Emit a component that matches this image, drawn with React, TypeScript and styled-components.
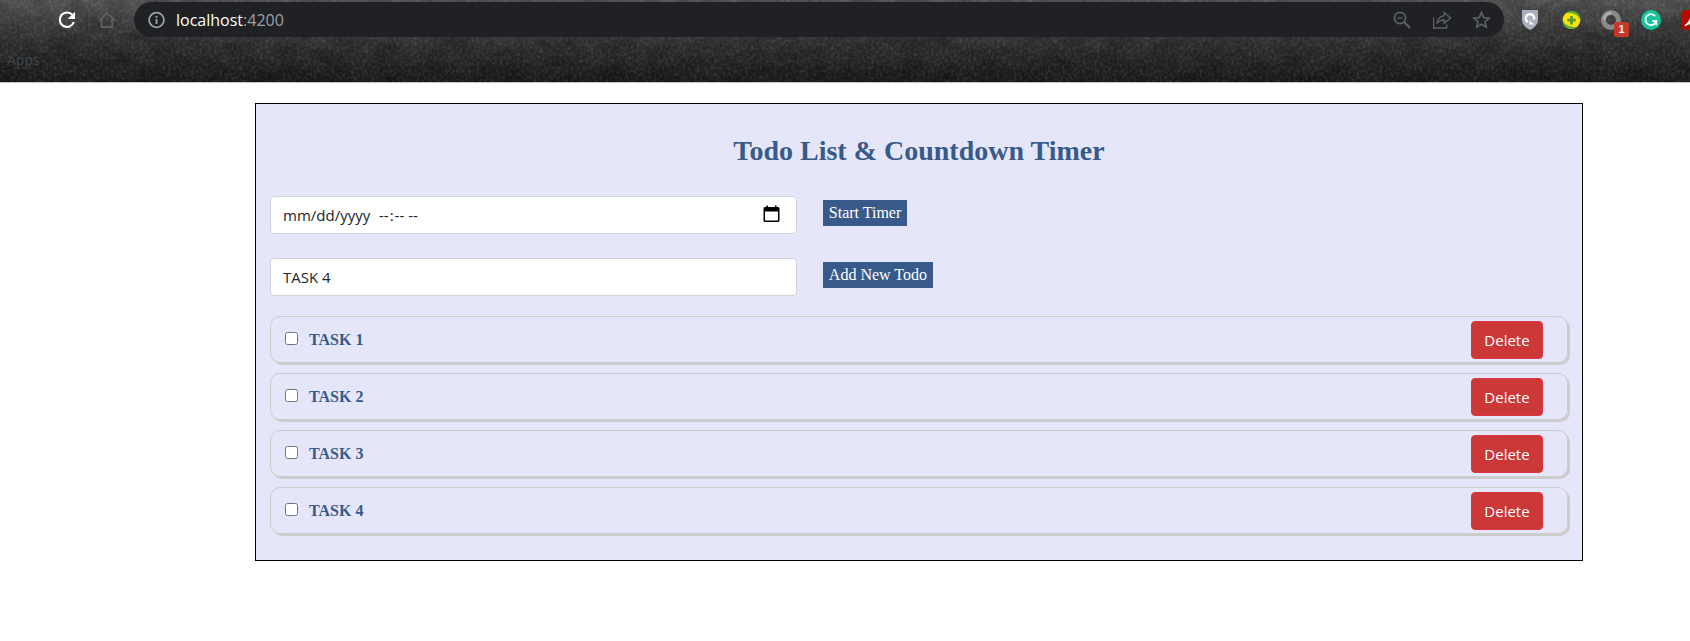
import React, { useRef, useState } from "react";
import styled, { createGlobalStyle } from "styled-components";

const GlobalStyle = createGlobalStyle`
  *, *::before, *::after { box-sizing: border-box; }
  body {
    margin: 0;
    background: #fff;
    font-family: "Open Sans", "Liberation Sans", sans-serif;
    font-size: 15px;
    line-height: 24px;
    color: #212529;
  }
`;

/* ---------- browser chrome ---------- */

const Chrome = styled.header`
  position: relative;
  overflow: hidden;
  height: 83px;
  padding-top: 2px;
  border-bottom: 1px solid #c4c4c4;
  background: linear-gradient(#525453 0, #3c3c3c 26px, #2a2a2a 52px, #191919 82px);
`;

const Texture = styled.svg`
  position: absolute;
  inset: 0;
  width: 100%;
  height: 100%;
`;

const Toolbar = styled.div`
  position: relative;
  display: flex;
  align-items: center;
  height: 35px;
`;

const Navigation = styled.nav`
  display: flex;
  flex: none;
  gap: 20px;
  padding: 0 17px;
`;

const IconButton = styled.button<{ $color?: string }>`
  position: relative;
  flex: none;
  width: 20px;
  height: 20px;
  padding: 0;
  border: 0;
  background: none;
  color: ${(p) => p.$color ?? "#5f6368"};
  svg { display: block; }
`;

const AddressBar = styled.div`
  display: flex;
  flex: 1;
  align-items: center;
  height: 35px;
  padding: 0 12px;
  border-radius: 18px;
  background: #202124;
`;

const Address = styled.div`
  flex: 1;
  padding-left: 10px;
  font-size: 16px;
  line-height: 24px;
  color: #9aa0a6;
  outline: 0;
`;

const Host = styled.span`
  color: #fff;
`;

const AddressActions = styled.div`
  display: flex;
  gap: 20px;
`;

const Extensions = styled.div`
  display: flex;
  flex: 0 0 186px;
  gap: 20px;
  overflow: hidden;
  padding: 8px 0 8px 17px;
`;

const CountBadge = styled.span`
  position: absolute;
  left: 13px;
  top: 12px;
  width: 15px;
  height: 15px;
  border-radius: 2px;
  background: #c5392b;
  color: #fff;
  font-size: 11px;
  font-weight: 700;
  line-height: 15px;
  text-align: center;
`;

const Bookmarks = styled.div`
  position: relative;
  padding: 11px 7px;
  font-size: 14px;
  line-height: 24px;
`;

const BookmarkLink = styled.a`
  color: #41464b;
  text-decoration: none;
`;

/* ---------- page ---------- */

const Page = styled.main`
  padding: 20px 107px 80px 255px;
`;

const Card = styled.section`
  padding: 28px 14px 26px;
  border: 1px solid #000;
  background: #e6e6fa;
  font-family: "Liberation Serif", serif;
`;

const Title = styled.h1`
  margin: 0 0 26px;
  color: #385a8a;
  font-size: 28px;
  line-height: 38px;
  text-align: center;
`;

const FormRow = styled.form`
  display: flex;
  align-items: flex-start;
  gap: 26px;
  margin-bottom: 24px;

  &:last-of-type { margin-bottom: 20px; }
`;

const fieldText = `
  color: #212529;
  font-family: "Open Sans", "Liberation Sans", sans-serif;
  font-size: 15px;
  line-height: 24px;
`;

const fieldBox = `
  flex: none;
  width: calc(100% * 5 / 12 - 14px);
  height: 38px;
  padding: 6px 12px;
  border: 1px solid #ced4da;
  border-radius: 4px;
  background: #fff;
`;

const TextInput = styled.input`
  ${fieldBox}
  ${fieldText}
`;

const DateTimeField = styled.div`
  ${fieldBox}
  display: flex;
  align-items: center;
  gap: 4px;
  padding-right: 14px;
`;

const DateTimeInput = styled.input`
  ${fieldText}
  height: 24px;
  padding: 0;
  border: 0;
  background: none;

  &[type="date"] { width: 91px; }
  &::-webkit-calendar-picker-indicator { display: none; }
  &::-webkit-datetime-edit { padding: 0; }
  &::-webkit-datetime-edit-month-field,
  &::-webkit-datetime-edit-day-field,
  &::-webkit-datetime-edit-year-field { padding: 0; }
`;

const PickerButton = styled(IconButton)`
  margin-left: auto;
`;

const ActionButton = styled.button`
  height: 26px;
  margin-top: 4px;
  padding: 0 6px;
  border: 0;
  background: #385a8a;
  color: #fff;
  font-family: "Liberation Serif", serif;
  font-size: 16px;
  line-height: 24px;
`;

const TaskList = styled.ul`
  display: flex;
  flex-direction: column;
  gap: 10px;
  margin: 0;
  padding: 0;
  list-style: none;
`;

const TaskRow = styled.li`
  display: flex;
  align-items: center;
  justify-content: space-between;
  height: 47px;
  padding: 1px 24px 0 14px;
  border: 1px solid #ccc;
  border-radius: 10px;
  box-shadow: 2px 2px 0 #ccc;
`;

const TaskLabel = styled.label`
  display: flex;
  align-items: center;
  gap: 11px;
  color: #385a8a;
  font-size: 16px;
  font-weight: 700;
  line-height: 24px;
`;

const TaskCheckbox = styled.input`
  width: 13px;
  height: 13px;
  margin: 0 0 3px;
`;

const DeleteButton = styled.button`
  min-width: 72px;
  height: 38px;
  padding: 0 12px;
  border: 1px solid #dc3545;
  border-radius: 4px;
  background: #cb3837;
  color: #fff;
  font-family: "Open Sans", "Liberation Sans", sans-serif;
  font-size: 15px;
  line-height: 24px;
`;

const Icon = ({ children }: { children: React.ReactNode }) => (
  <svg width="20" height="20" viewBox="0 0 20 20" fill="none" aria-hidden="true">
    {children}
  </svg>
);

const RockTexture = () => (
  <Texture aria-hidden="true">
    <filter id="grain" x="0" y="0" width="100%" height="100%">
      <feTurbulence type="fractalNoise" baseFrequency="0.35 0.3" numOctaves="3" seed="8" />
      <feColorMatrix values="0 0 0 0 1  0 0 0 0 1  0 0 0 0 1  1 0 0 0 -0.4" />
    </filter>
    <filter id="shade" x="0" y="0" width="100%" height="100%">
      <feTurbulence type="fractalNoise" baseFrequency="0.04 0.06" numOctaves="5" seed="21" />
      <feColorMatrix values="0 0 0 0 0  0 0 0 0 0  0 0 0 0 0  2 0 0 0 -0.7" />
    </filter>
    <rect width="100%" height="100%" filter="url(#grain)" opacity="0.25" />
    <rect width="100%" height="100%" filter="url(#shade)" opacity="0.25" />
  </Texture>
);

const BrowserChrome = () => (
  <Chrome>
    <RockTexture />
    <Toolbar>
      <Navigation aria-label="Browser navigation">
        <IconButton type="button" aria-label="Forward" $color="#3b3f43">
          <Icon>
            <path d="M5 10h10M11 6l4 4-4 4" stroke="currentColor" strokeWidth="1.5" />
          </Icon>
        </IconButton>
        <IconButton type="button" aria-label="Reload" $color="#fff">
          <Icon>
            <path d="M15.6 5.2A7.2 7.2 0 1 0 16.8 12" stroke="currentColor" strokeWidth="2.1" />
            <path d="M18 1.8v7.3h-7.3z" fill="currentColor" />
          </Icon>
        </IconButton>
        <IconButton type="button" aria-label="Home" $color="#5b5f65">
          <Icon>
            <path
              d="M2 10.6 10 3l8 7.6M4.7 9v8h10.6V9"
              stroke="currentColor"
              strokeWidth="1.9"
            />
          </Icon>
        </IconButton>
      </Navigation>
      <AddressBar>
        <IconButton type="button" aria-label="Site information" $color="#9aa0a6">
          <Icon>
            <circle cx="10.5" cy="10" r="7.4" stroke="currentColor" strokeWidth="1.8" />
            <path d="M10.5 9v5M10.5 6v1.8" stroke="currentColor" strokeWidth="1.9" />
          </Icon>
        </IconButton>
        <Address role="textbox" aria-label="Address" tabIndex={0}>
          <Host>localhost</Host>:4200
        </Address>
        <AddressActions>
          <IconButton type="button" aria-label="Zoom out">
            <Icon>
              <circle cx="8" cy="8" r="5.6" stroke="currentColor" strokeWidth="1.6" />
              <path d="M12 12l6 6" stroke="currentColor" strokeWidth="2" />
              <path d="M5.5 8h5" stroke="currentColor" strokeWidth="1.3" />
            </Icon>
          </IconButton>
          <IconButton type="button" aria-label="Share">
            <Icon>
              <path d="M1.6 7.5V18h13.2v-3.4" stroke="currentColor" strokeWidth="1.3" />
              <path
                d="M12.2 2.5 18.6 8l-6.4 5.3V10c-3.2 0-5.5 1-7.4 3.6.7-4 3-7.3 7.4-7.9z"
                stroke="currentColor"
                strokeWidth="1.3"
              />
            </Icon>
          </IconButton>
          <IconButton type="button" aria-label="Bookmark this page">
            <Icon>
              <path
                d="M9.5 2.5l2.2 5.1 5.5.5-4.2 3.6 1.3 5.4-4.8-2.9-4.8 2.9 1.3-5.4-4.2-3.6 5.5-.5z"
                stroke="currentColor"
                strokeWidth="1.6"
              />
            </Icon>
          </IconButton>
        </AddressActions>
      </AddressBar>
      <Extensions>
        <IconButton type="button" aria-label="Shield extension">
          <Icon>
            <path d="M1 0h16v10c0 4.500-4 8-8 10-4-2-8-5.500-8-10z" fill="#aab0bd" />
            <path d="M6.800 12A4.200 4.200 0 1 1 13 9.500" stroke="#fff" strokeWidth="2.400" />
            <path d="M8.500 10.500v4h4.500z" fill="#fff" />
          </Icon>
        </IconButton>
        <IconButton type="button" aria-label="Plus extension">
          <Icon>
            <circle cx="10.5" cy="10" r="8.8" fill="#f9e406" />
            <path d="M4 3.5C8 0 15 0 18 5c1.5 2 1.6 4 1.3 6C18.500 5 11 2 4 3.500z" fill="#5fae35" />
            <path d="M17 16.5C13 20 6 20 3 15c-1.500-2-1.600-4-1.300-6C2.500 15 10 18 17 16.500z" fill="#5fae35" />
            <path d="M10.5 6v8.500M6.200 10.200h8.600" stroke="#5a9c32" strokeWidth="2.8" />
          </Icon>
        </IconButton>
        <IconButton type="button" aria-label="Ring extension, 1 notification">
          <Icon>
            <circle cx="10" cy="10" r="7.500" stroke="#8a8a8a" strokeWidth="5" />
            <path d="M3 10a7 7 0 0 1 7-7" stroke="#b5b5b5" strokeWidth="2" />
          </Icon>
          <CountBadge>1</CountBadge>
        </IconButton>
        <IconButton type="button" aria-label="Grammar extension">
          <Icon>
            <circle cx="10" cy="10" r="10" fill="#15c39a" />
            <path d="M14.2 6.2A5.500 5.500 0 1 0 15.200 11h-4" stroke="#fff" strokeWidth="1.8" />
            <path d="M15.2 10.2v5" stroke="#fff" strokeWidth="1.7" />
          </Icon>
        </IconButton>
        <IconButton type="button" aria-label="PDF extension">
          <Icon>
            <rect x="1" width="19" height="20" rx="3" fill="#b30b00" />
            <path d="M4 15.5c3-1 6-5.500 6.200-10.500.8 4 3 7 6.800 7.500-4-.5-9 .5-13 3z" stroke="#fff" strokeWidth="1.6" />
          </Icon>
        </IconButton>
      </Extensions>
    </Toolbar>
    <Bookmarks>
      <BookmarkLink href="#apps">Apps</BookmarkLink>
    </Bookmarks>
  </Chrome>
);

export default function App() {
  const [tasks, setTasks] = useState(["TASK 1", "TASK 2", "TASK 3", "TASK 4"]);
  const [draft, setDraft] = useState("TASK 4");
  const dateRef = useRef<HTMLInputElement>(null);

  const addTask = (event: React.FormEvent) => {
    event.preventDefault();
    if (draft.trim()) setTasks([...tasks, draft.trim()]);
  };

  return (
    <>
      <GlobalStyle />
      <BrowserChrome />
      <Page>
        <Card>
          <Title>Todo List &amp; Countdown Timer</Title>
          <FormRow onSubmit={(event) => event.preventDefault()}>
            <DateTimeField>
              <DateTimeInput ref={dateRef} type="date" aria-label="Timer end date" />
              <DateTimeInput type="time" aria-label="Timer end time" />
              <PickerButton
                type="button"
                aria-label="Open calendar"
                $color="#000"
                onClick={() => dateRef.current?.showPicker()}
              >
                <Icon>
                  <path
                    d="M3 2h1.500V.500H6V2h7V.500h1.500V2H16a1.500 1.500 0 0 1 1.500 1.500v12A1.500 1.500 0 0 1 16 17H3a1.500 1.500 0 0 1-1.500-1.500v-12A1.500 1.500 0 0 1 3 2zm0 4.500v9h13v-9z"
                    fill="currentColor"
                    fillRule="evenodd"
                  />
                </Icon>
              </PickerButton>
            </DateTimeField>
            <ActionButton type="submit">Start Timer</ActionButton>
          </FormRow>
          <FormRow onSubmit={addTask}>
            <TextInput
              type="text"
              aria-label="New todo"
              value={draft}
              onChange={(event) => setDraft(event.target.value)}
            />
            <ActionButton type="submit">Add New Todo</ActionButton>
          </FormRow>
          <TaskList>
            {tasks.map((task, index) => (
              <TaskRow key={index}>
                <TaskLabel>
                  <TaskCheckbox type="checkbox" />
                  {task}
                </TaskLabel>
                <DeleteButton
                  type="button"
                  onClick={() => setTasks(tasks.filter((_, i) => i !== index))}
                >
                  Delete
                </DeleteButton>
              </TaskRow>
            ))}
          </TaskList>
        </Card>
      </Page>
    </>
  );
}
